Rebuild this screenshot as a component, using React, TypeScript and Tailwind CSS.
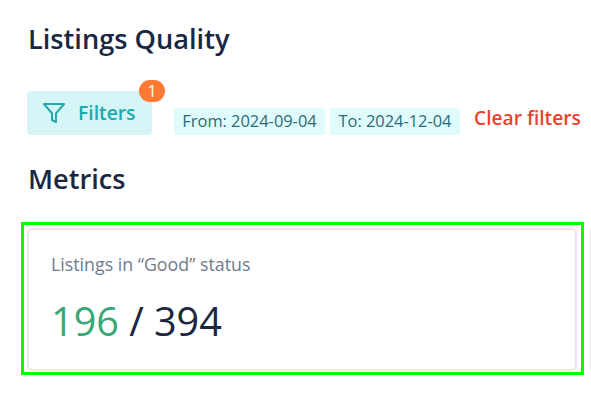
export default function App() {
  return (
    <div className="h-[400px] w-[591px] overflow-hidden bg-white font-['Open_Sans',sans-serif]">
      <div className="pl-[28px] pt-[22px]">
        <h1 className="text-[27.2px] leading-[34px] font-semibold text-[#1a2742]">Listings Quality</h1>

        <div className="mt-[35px] flex items-end">
          <div className="relative -ml-px">
            <button className="flex h-[44px] w-[125px] items-center gap-[12px] rounded-[4px] bg-[#d5f5f6] pl-[15px] text-[19.3px] font-semibold text-[#20a9ae]">
              <svg
                viewBox="0 0 24 24"
                className="h-[24px] w-[24px]"
                fill="none"
                stroke="currentColor"
                strokeWidth={2}
                strokeLinecap="round"
                strokeLinejoin="round"
              >
                <polygon points="22 3 2 3 10 12.46 10 19 14 21 14 12.46 22 3" />
              </svg>
              Filters
            </button>
            <span className="absolute -top-[11px] -right-[13px] flex h-[22px] w-[26px] items-center justify-center rounded-full bg-[#ff7a33] text-[16px] text-white">
              1
            </span>
          </div>
          <span className="ml-[22px] flex h-[27px] w-[151px] items-center justify-center rounded-[3px] bg-[#e0fbfc] text-[16.4px] text-[#2b6c77]">
            From: 2024-09-04
          </span>
          <span className="ml-[5px] flex h-[27px] w-[130px] items-center justify-center rounded-[3px] bg-[#e0fbfc] text-[16.4px] text-[#2b6c77]">
            To: 2024-12-04
          </span>
          <span className="ml-[14px] h-[27px] text-[19.2px] leading-[20px] font-semibold text-[#e8432d]">Clear filters</span>
        </div>

        <h2 className="mt-[27px] text-[27.2px] leading-[34px] font-semibold text-[#1a2742]">Metrics</h2>
      </div>

      <div className="relative mt-[26px] flex pl-[21px]">
        <div className="h-[153px] w-[563px] shrink-0 border-[3px] border-[#00ff00] p-[3px] pb-[1px]">
          <div className="h-full w-[550px] rounded-[5px] border-2 border-[#e6e8ee] pl-[22px] pt-[23px]">
            <p className="text-[17.8px] leading-[22px] text-[#6f7a8f]">Listings in “Good” status</p>
            <p className="mt-[20px] text-[39.6px] leading-[52px] text-[#1a2742]">
              <span className="text-[#3aa876]">196</span> / 394
            </p>
          </div>
        </div>
        <div className="ml-[6px] h-[142px] w-[10px] translate-y-[6px] rounded-l-[5px] border-y-2 border-l-2 border-[#e6e8ee]" />
      </div>
    </div>
  );
}
